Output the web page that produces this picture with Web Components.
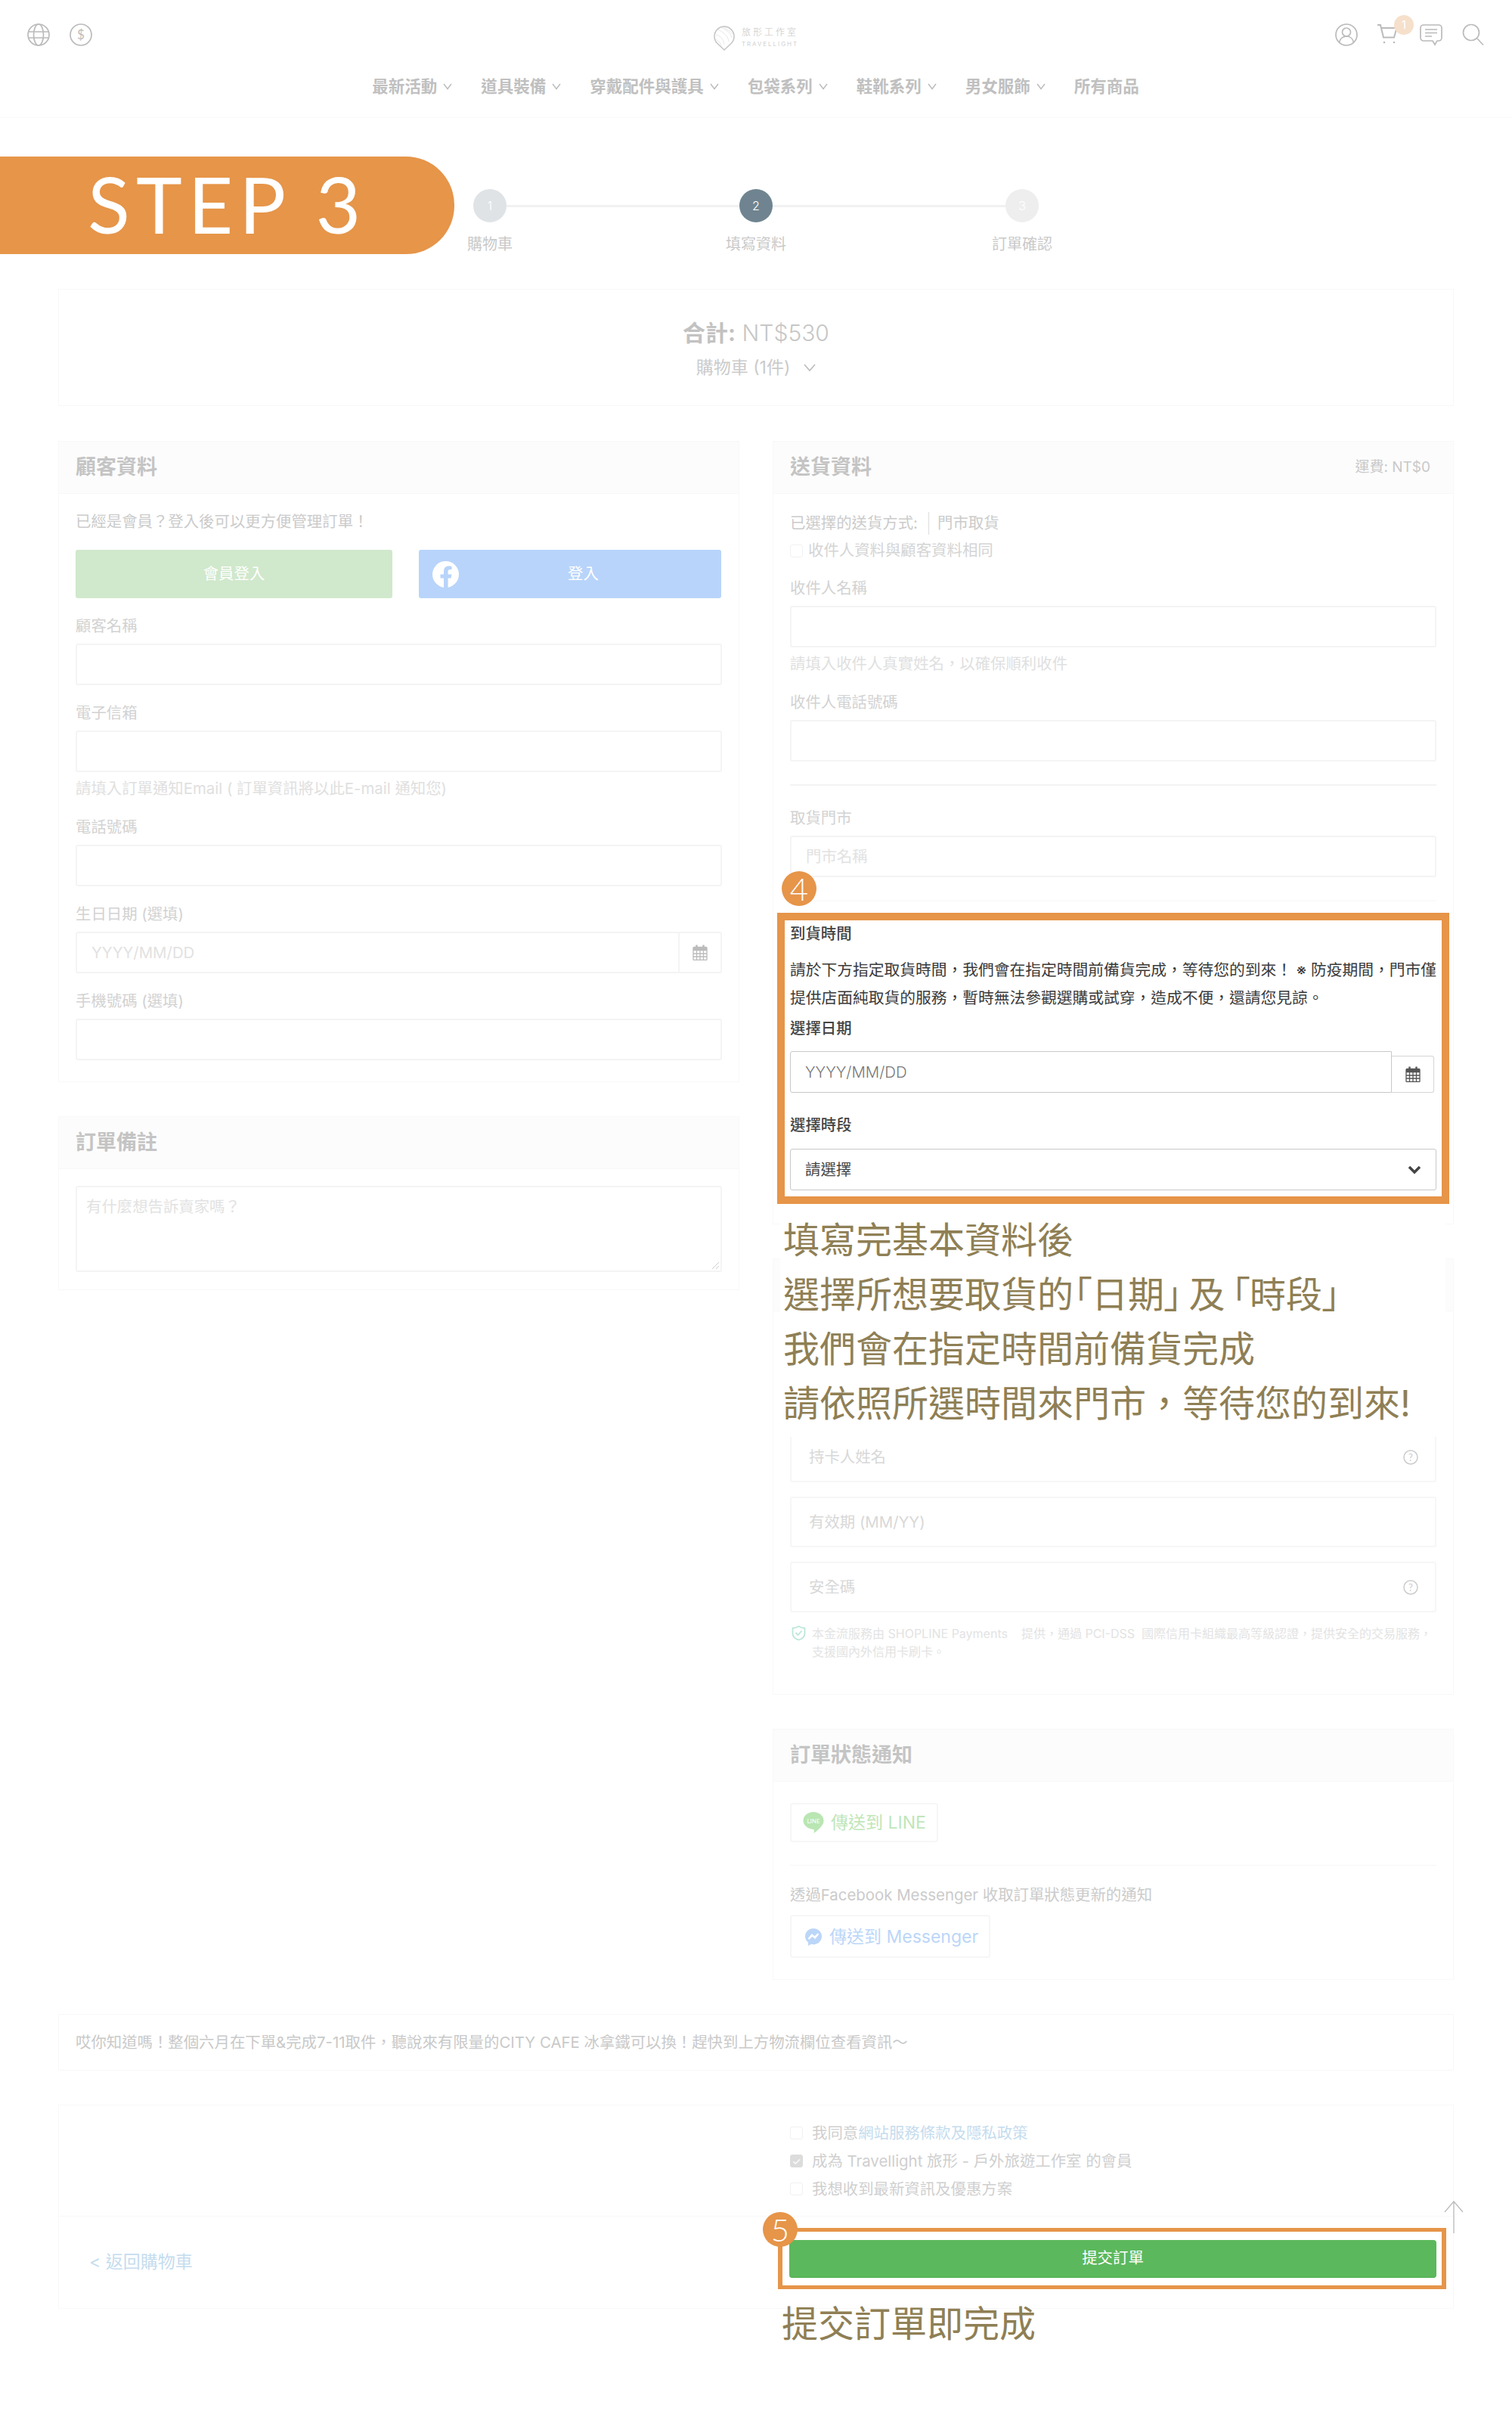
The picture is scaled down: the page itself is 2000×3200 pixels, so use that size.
<!DOCTYPE html>
<html lang="zh-Hant">
<head>
<meta charset="utf-8">
<title>Step 3</title>
<style>
  html, body { margin: 0; background: #fff; }
  body {
    position: relative;
    min-height: 3200px;
    font: 400 20.4px/28px Inter, "Noto Sans CJK TC", sans-serif;
    color: #cbcbcb;
  }
</style>
</head>
<body>
<site-header></site-header>
<step-bar></step-bar>
<cart-summary></cart-summary>

<form-columns>
  <div slot="left">
    <ui-panel heading="顧客資料">
      <member-login></member-login>
      <form-field label="顧客名稱"></form-field>
      <form-field label="電子信箱" hint="請填入訂單通知Email ( 訂單資訊將以此E-mail 通知您)"></form-field>
      <form-field label="電話號碼"></form-field>
      <form-field label="生日日期 (選填)" placeholder="YYYY/MM/DD" addon></form-field>
      <form-field label="手機號碼 (選填)"></form-field>
      <panel-gap size="28"></panel-gap>
    </ui-panel>
    <ui-panel heading="訂單備註">
      <note-area placeholder="有什麼想告訴賣家嗎？"></note-area>
    </ui-panel>
  </div>

  <div slot="right">
    <ui-panel heading="送貨資料" aside="運費: NT$0">
      <delivery-method></delivery-method>
      <form-field label="收件人名稱" hint="請填入收件人真實姓名，以確保順利收件" style="--top:18px"></form-field>
      <form-field label="收件人電話號碼"></form-field>
      <panel-rule top="30"></panel-rule>
      <form-field label="取貨門市" placeholder="門市名稱" style="--top:29px"></form-field>
      <panel-rule top="30" light></panel-rule>
      <pickup-time></pickup-time>
      <panel-gap size="26"></panel-gap>
    </ui-panel>
    <ui-panel>
      <panel-gap size="159"></panel-gap>
      <card-input placeholder="持卡人姓名" help></card-input>
      <card-input placeholder="有效期 (MM/YY)"></card-input>
      <card-input placeholder="安全碼" help></card-input>
      <secure-note></secure-note>
    </ui-panel>
    <ui-panel heading="訂單狀態通知">
      <notify-options></notify-options>
    </ui-panel>
  </div>
</form-columns>

<tip-banner>哎你知道嗎！整個六月在下單&amp;完成7-11取件，聽說來有限量的CITY CAFE 冰拿鐵可以換！趕快到上方物流欄位查看資訊～</tip-banner>
<order-actions></order-actions>

<tutorial-note mask style="left:1032px;top:1596px;width:880px;height:304px;padding:8px 0 0 4px">填寫完基本資料後<br>選擇所想要取貨的<span style="font-feature-settings:'palt';word-spacing:-5px">「日期」 及 「時段」</span><br>我們會在指定時間前備貨完成<br>請依照所選時間來門市，等待您的到來!</tutorial-note>
<tutorial-note style="left:1032px;top:3037px;padding-left:2px">提交訂單即完成</tutorial-note>
<scroll-top></scroll-top>

<script>
const grey = '#bbb';

const chevron = `<svg width="12" height="9" viewBox="0 0 12 9" fill="none" stroke="${grey}" stroke-width="1.4"><path d="M1 1l5 6.5L11 1"/></svg>`;

const calendar = (color) => `<svg width="20" height="21" viewBox="0 0 20 21" fill="none" stroke="${color}" stroke-width="1.3">
  <rect x="1" y="3.5" width="18" height="17" rx="1"/>
  <path d="M1 7.5h18M1 12h18M1 16h18M5.5 7.5v13M10 7.5v13M14.5 7.5v13"/>
  <path d="M1 5.5h18" stroke-width="3"/>
  <path d="M5.5 0.5v4M14.5 0.5v4" stroke-width="2.4"/>
</svg>`;

const icons = {
  globe: `<circle cx="15" cy="15" r="14"/><ellipse cx="15" cy="15" rx="6.5" ry="14"/><path d="M2 11h26M2 19h26"/>`,
  dollar: `<circle cx="15" cy="15" r="14"/><text x="15" y="21" text-anchor="middle" font-size="17" fill="${grey}" stroke="none" font-family="Lato">$</text>`,
  user: `<circle cx="15" cy="15" r="14"/><circle cx="15" cy="11.5" r="5.5"/><path d="M5.5 25c1-5 5-8 9.5-8s8.5 3 9.5 8"/>`,
  cart: `<path d="M0 2h4l4 16.5h14l3.5-12.5H5" stroke-width="2"/><circle cx="9" cy="25" r="1.3" fill="${grey}" stroke="none"/><circle cx="22" cy="25" r="1.3" fill="${grey}" stroke="none"/>`,
  chat: `<path d="M5 2h20a4 4 0 0 1 4 4v13a4 4 0 0 1-4 4h-2l-3 5-3-5H5a4 4 0 0 1-4-4V6a4 4 0 0 1 4-4z"/><path d="M7 8h16M7 12.500h16M7 17h9"/>`,
  search: `<circle cx="12" cy="12" r="10.500"/><path d="M20 20l8 8.500"/>`,
};
const icon = (name) => `<svg width="30" height="30" viewBox="0 0 30 30" fill="none" stroke="${grey}" stroke-width="1.7">${icons[name]}</svg>`;

class Base extends HTMLElement {
  connectedCallback() {
    if (this.shadowRoot) return;
    const shadow = this.attachShadow({ mode: 'open' });
    shadow.innerHTML = `<style>:host, * { box-sizing: border-box; } ${this.constructor.css}</style>${this.render()}`;
  }
  attr(name, fallback = '') {
    return this.hasAttribute(name) ? this.getAttribute(name) : fallback;
  }
}

class SiteHeader extends Base {
  static css = `
    :host { display: block; height: 156px; border-bottom: 1px solid #fafafa; }
    .top { height: 92px; display: grid; grid-template-columns: 1fr auto 1fr; align-items: center; padding: 0 36px; }
    .tools { display: flex; gap: 26px; align-items: center; }
    .tools.right { justify-content: flex-end; }
    .cart { position: relative; height: 30px; }
    .count {
      position: absolute; left: 22px; top: -24px; width: 26px; height: 26px; margin-top: 13px;
      border-radius: 50%; background: #f6e0cb; color: #fff; font-size: 15px; line-height: 26px; text-align: center;
    }
    .logo { display: flex; align-items: center; gap: 9px; padding-top: 8px; color: #c4c4c4; }
    .words { display: flex; flex-direction: column; font-weight: 300; }
    .zh { font-size: 12px; line-height: 16px; letter-spacing: 3px; }
    .en { font-size: 8px; line-height: 14px; letter-spacing: 2px; }
    nav { display: flex; justify-content: center; gap: 38px; height: 44px; align-items: center; padding-right: 1px; }
    .item { display: flex; align-items: center; gap: 8px; font-weight: 700; font-size: 21.500px; color: #c0c0c0; white-space: nowrap; }
  `;
  render() {
    const menu = ['最新活動', '道具裝備', '穿戴配件與護具', '包袋系列', '鞋靴系列', '男女服飾'];
    return `
      <div class="top">
        <div class="tools">${icon('globe')}${icon('dollar')}</div>
        <div class="logo">
          <svg width="28" height="33" viewBox="0 0 28 33" fill="none" stroke="#c6c6c6">
            <path stroke-width="1.6" d="M14 32L4.500 23A13 13 0 1 1 23.500 23z"/>
            <path stroke-width=".7" stroke="#ddd" d="M10 2c6 4 12 6 14 14M6 5c7 4 13 8 14 16M3 12c5 1 10 5 11 13M2 18c4 1 7 4 8 9M14 3c4 2 8 4 11 8"/>
          </svg>
          <div class="words"><span class="zh">旅形工作室</span><span class="en">TRAVELLIGHT</span></div>
        </div>
        <div class="tools right">
          ${icon('user')}
          <div class="cart">${icon('cart')}<span class="count">1</span></div>
          ${icon('chat')}${icon('search')}
        </div>
      </div>
      <nav>
        ${menu.map((m) => `<div class="item">${m}${chevron}</div>`).join('')}
        <div class="item">所有商品</div>
      </nav>`;
  }
}

class StepBar extends Base {
  static css = `
    :host { display: flex; margin-top: 51px; height: 129px; }
    .band {
      width: 601px; height: 129px; background: #e69549; border-radius: 0 64px 64px 0 / 0 64px 64px 0;
      color: #fff; font: 400 103px/125px Lato, sans-serif; letter-spacing: 8px; padding-left: 116px; white-space: nowrap;
    }
    .steps { margin: 43px 0 0 25px; display: grid; grid-template-columns: 44px 308px 44px 308px 44px; grid-template-rows: 44px 28px; row-gap: 15px; align-items: center; }
    .dot { width: 44px; height: 44px; border-radius: 50%; color: #fff; font-size: 16px; font-weight: 300; line-height: 44px; text-align: center; }
    .line { height: 3px; background: #f1f1f1; }
    .label { grid-row: 2; display: flex; justify-content: center; white-space: nowrap; font-size: 20px; color: #c9c9c9; }
  `;
  render() {
    return `
      <div class="band">STEP 3</div>
      <div class="steps">
        <div class="dot" style="background:#dfe3e6">1</div><div class="line"></div>
        <div class="dot" style="background:#6f8490">2</div><div class="line"></div>
        <div class="dot" style="background:#eee">3</div>
        <div class="label" style="grid-column:1">購物車</div>
        <div class="label" style="grid-column:3">填寫資料</div>
        <div class="label" style="grid-column:5">訂單確認</div>
      </div>`;
  }
}

class CartSummary extends Base {
  static css = `
    :host {
      display: flex; flex-direction: column; align-items: center; margin: 46px 77px 0; height: 155px;
      border: 1px solid #f8f8f8; padding-top: 37px;
    }
    .total { font-size: 30px; line-height: 40px; font-weight: 300; color: #c6c6c6; }
    b { font-weight: 700; color: #c2c2c2; }
    .count { display: flex; align-items: center; gap: 18px; margin-top: 8px; font-size: 23px; line-height: 36px; color: #cbcbcb; }
  `;
  render() {
    return `
      <div class="total"><b>合計:</b> NT$530</div>
      <div class="count">購物車 (1件) <svg width="16" height="11" viewBox="0 0 16 11" fill="none" stroke="${grey}" stroke-width="1.6"><path d="M1 1l7 8 7-8"/></svg></div>`;
  }
}

class FormColumns extends Base {
  static css = `
    :host { display: grid; grid-template-columns: 901px 901px; column-gap: 44px; margin: 46px 77px 0; align-items: start; }
  `;
  render() {
    return `<slot name="left"></slot><slot name="right"></slot>`;
  }
}

class UiPanel extends Base {
  static css = `
    :host { display: block; border: 1px solid #f8f8f8; margin-bottom: 45px; }
    .head {
      display: flex; justify-content: space-between; align-items: center; height: 69px; padding: 0 30px 0 22px;
      background: #fcfcfc; border-bottom: 1px solid #f8f8f8;
    }
    h3 { margin: 0; font-size: 27px; font-weight: 700; color: #c4c4c4; }
    .aside { font-size: 19px; color: #c9c9c9; }
    .body { padding: 0 22px; }
  `;
  render() {
    const heading = this.attr('heading');
    const aside = this.attr('aside');
    const head = `<div class="head"><h3>${heading}</h3>${aside ? `<span class="aside">${aside}</span>` : ''}</div>`;
    return `${heading ? head : '<div class="head"></div>'}<div class="body"><slot></slot></div>`;
  }
}

class PanelGap extends Base {
  static css = `:host { display: block; }`;
  render() {
    this.style.height = `${this.attr('size', 20)}px`;
    return '';
  }
}

class PanelRule extends Base {
  static css = `
    :host { display: block; height: 2px; background: #f3f3f3; }
    :host([light]) { background: #fafafa; }
  `;
  render() {
    this.style.marginTop = `${this.attr('top', 20)}px`;
    return '';
  }
}

class MemberLogin extends Base {
  static css = `
    :host { display: block; padding-top: 23px; }
    .intro { color: #cbcbcb; }
    .buttons { display: grid; grid-template-columns: 419px 400px; column-gap: 35px; margin-top: 23px; margin-right: -1px; }
    .btn { height: 64px; border-radius: 3px; color: #fff; display: flex; align-items: center; justify-content: center; }
    .green { background: #d0e8cc; }
    .blue { background: #b8d4fa; padding: 0 18px; }
    .blue span { flex: 1; text-align: center; }
  `;
  render() {
    return `
      <div class="intro">已經是會員？登入後可以更方便管理訂單！</div>
      <div class="buttons">
        <div class="btn green">會員登入</div>
        <div class="btn blue">
          <svg width="35" height="35" viewBox="0 0 35 35"><circle cx="17.500" cy="17.500" r="17.500" fill="#fff"/><path fill="#b8d4fa" d="M15 35V22.500h-4.500V17.500H15v-4c0-4.500 2.700-7 6.700-7 1.900 0 3.800.3 3.800.3v4.300h-2.100c-2.100 0-2.800 1.300-2.800 2.700v3.700h4.800l-.8 5h-4V35z"/></svg>
          <span>登入</span>
        </div>
      </div>`;
  }
}

class FormField extends Base {
  static css = `
    :host { display: block; margin-top: var(--top, 23px); }
    .label { color: #d2d2d2; }
    .row { display: flex; margin-top: var(--gap, 9px); align-items: flex-end; }
    .box {
      flex: 1; height: 55px; border: 2px solid #f4f4f4; border-radius: 3px; padding: 0 19px;
      display: flex; align-items: center; justify-content: space-between; color: #e2e2e2;
    }
    .addon { width: 56px; height: 55px; border: 2px solid #f4f4f4; border-left: 0; border-radius: 0 3px 3px 0; display: flex; align-items: center; justify-content: center; }
    .has-addon .box { border-radius: 3px 0 0 3px; }
    .hint { margin-top: 8px; color: #e0e0e0; }
    :host([strong]) .label { color: #444; font-weight: 500; }
    :host([strong]) .box { border: 1.500px solid #c8c8c8; color: #777; font-weight: 300; }
    :host([strong][select]) .box { color: #444; font-weight: 400; }
    :host([strong]) .addon { height: 49px; margin-right: 3px; border: 1px solid #d5d5d5; border-left: 0; }
  `;
  render() {
    const strong = this.hasAttribute('strong');
    const addon = this.hasAttribute('addon');
    const arrow = this.hasAttribute('select')
      ? `<svg width="18" height="12" viewBox="0 0 18 12" fill="none" stroke="#444" stroke-width="3.500"><path d="M2 2l7 7 7-7"/></svg>` : '';
    const hint = this.attr('hint');
    return `
      <div class="label">${this.attr('label')}</div>
      <div class="row ${addon ? 'has-addon' : ''}">
        <div class="box"><span>${this.attr('placeholder')}</span>${arrow}</div>
        ${addon ? `<div class="addon">${calendar(strong ? '#555' : '#bbb')}</div>` : ''}
      </div>
      ${hint ? `<div class="hint">${hint}</div>` : ''}`;
  }
}

class NoteArea extends Base {
  static css = `
    :host { display: block; padding: 22px 0 23px; }
    .area { position: relative; height: 114px; border: 2px solid #f4f4f4; border-radius: 3px; padding: 12px 12px; color: #e2e2e2; }
    svg { position: absolute; right: 1px; bottom: 1px; }
  `;
  render() {
    return `<div class="area">${this.attr('placeholder')}<svg width="11" height="11" viewBox="0 0 11 11" fill="none" stroke="#ccc"><path d="M1 10l9-9M6 10l4-4"/></svg></div>`;
  }
}

class DeliveryMethod extends Base {
  static css = `
    :host { display: block; padding-top: 21px; }
    .line { display: flex; align-items: center; height: 36px; color: #cbcbcb; white-space: nowrap; }
    .sep { width: 1px; height: 30px; background: #ddd; margin: 0 11px 0 14px; }
    .check { width: 17px; height: 17px; border: 1px solid #f2f2f2; border-radius: 3px; margin-right: 7px; }
    .muted { color: #d4d4d4; }
  `;
  render() {
    return `
      <div class="line">已選擇的送貨方式:<span class="sep"></span>門市取貨</div>
      <div class="line muted"><span class="check"></span>收件人資料與顧客資料相同</div>`;
  }
}

class PickupTime extends Base {
  static css = `
    :host {
      display: block; position: relative; margin: 15px -17px 0; border: 10px solid #e69549; padding: 4px 7px 8px; background: #fff;
    }
    .badge {
      position: absolute; left: -4px; top: -65px; width: 46px; height: 46px; border-radius: 50%;
      background: #e69549; color: #fff; font: 300 42px/46px Lato, sans-serif; text-align: center;
    }
    .title { color: #444; font-weight: 500; }
    p { margin: 15px -8px 0 0; color: #3a3a3a; font-size: 20.75px; line-height: 37px; }
  `;
  render() {
    return `
      <span class="badge">4</span>
      <div class="title">到貨時間</div>
      <p>請於下方指定取貨時間，我們會在指定時間前備貨完成，等待您的到來！ ※ 防疫期間，門市僅<br>提供店面純取貨的服務，暫時無法參觀選購或試穿，造成不便，還請您見諒。</p>
      <form-field strong addon label="選擇日期" placeholder="YYYY/MM/DD" style="--top:8px;--gap:16px"></form-field>
      <form-field strong select label="選擇時段" placeholder="請選擇" style="--top:29px;--gap:17px"></form-field>`;
  }
}

class CardInput extends Base {
  static css = `
    :host { display: block; margin-bottom: 19px; }
    .box {
      height: 67px; border: 2px solid #f6f6f6; border-radius: 3px; padding: 0 22px 0 23px;
      display: flex; align-items: center; justify-content: space-between; color: #d8d8d8;
    }
  `;
  render() {
    const help = `<svg width="20" height="20" viewBox="0 0 20 20" fill="none" stroke="#ccc" stroke-width="1.500"><circle cx="10" cy="10" r="9"/><text x="10" y="15" text-anchor="middle" font-size="13" fill="#ccc" stroke="none" font-family="Lato">?</text></svg>`;
    return `<div class="box"><span>${this.attr('placeholder')}</span>${this.hasAttribute('help') ? help : ''}</div>`;
  }
}

class SecureNote extends Base {
  static css = `
    :host { display: flex; gap: 8px; margin-top: -3px; padding: 0 0 44px 2px; font-size: 16px; line-height: 24px; color: #e3e3e3; }
    svg { flex: none; margin-top: 1px; }
    span { white-space: nowrap; }
  `;
  render() {
    return `
      <svg width="19" height="21" viewBox="0 0 19 21" fill="none" stroke="#bde6da" stroke-width="1.800"><path d="M9.500 1.500c2.500 1.500 5 2.300 8 2.500v7c0 4-3.500 7-8 8.500-4.500-1.500-8-4.500-8-8.500V4c3-.2 5.500-1 8-2.500z"/><path d="M5.500 10l3 3 5-5.500"/></svg>
      <span>本金流服務由 SHOPLINE Payments &nbsp;&nbsp; 提供，通過 PCI-DSS &nbsp;國際信用卡組織最高等級認證，提供安全的交易服務，<br>支援國內外信用卡刷卡。</span>`;
  }
}

class NotifyOptions extends Base {
  static css = `
    :host { display: block; padding: 28px 0 28px; }
    .send {
      display: inline-flex; align-items: center; gap: 9px; border: 2px solid #f6f6f6; border-radius: 4px; font-size: 23px; white-space: nowrap;
    }
    .line { height: 52px; padding: 0 14px 0 15px; color: #bfe6b8; }
    .msgr { height: 57px; padding: 0 14px 0 17px; color: #bcd6f8; }
    hr { border: 0; height: 1px; background: #f6f6f6; margin: 30px 0 25px; }
    .text { color: #cbcbcb; margin-bottom: 12px; }
    .wrap { display: flex; }
  `;
  render() {
    return `
      <div class="wrap"><div class="send line">
        <svg width="28" height="31" viewBox="0 0 28 31"><path fill="#b9e6b2" d="M14 1c7.500 0 13.500 5 13.500 11.500 0 5-5 11-13 16.500 1-3.500.5-5-1-5C6.500 23.500.5 18.500.5 12.500.5 6 6.500 1 14 1z"/><text x="14" y="16" text-anchor="middle" font-size="8" fill="#fff" font-family="Lato">LINE</text></svg>
        傳送到 LINE</div></div>
      <hr>
      <div class="text">透過Facebook Messenger 收取訂單狀態更新的通知</div>
      <div class="wrap"><div class="send msgr">
        <svg width="24" height="24" viewBox="0 0 24 24"><path fill="#bcd6f8" d="M12 1C6 1 1 5.500 1 11.500c0 3.300 1.500 6 4 8V24l4-2.200c1 .3 2 .4 3 .4 6 0 11-4.700 11-10.700S18 1 12 1z"/><path fill="none" stroke="#fff" stroke-width="2" d="M5.500 15L10 9.500l3.500 3L18.500 8 14 13.500l-3.500-3z"/></svg>
        傳送到 Messenger</div></div>`;
  }
}

class TipBanner extends Base {
  static css = `
    :host { display: flex; align-items: center; margin: 0 77px; height: 75px; padding: 0 22px 0 22px; border: 1px solid #f8f8f8; color: #c9c9c9; }
  `;
  render() {
    return `<slot></slot>`;
  }
}

class OrderActions extends Base {
  static css = `
    :host { display: block; margin: 45px 77px 0; height: 270px; border: 1px solid #f8f8f8; }
    .agree { height: 147px; border-bottom: 1px solid #f8f8f8; padding: 18px 0 0 967px; }
    .check { display: flex; align-items: center; height: 37px; color: #cfcfcf; white-space: nowrap; }
    .box { width: 17px; height: 17px; border: 1px solid #f1f1f1; border-radius: 3px; margin-right: 12px; flex: none; }
    .box.on { background: #dcdcdc; border-color: #dcdcdc; color: #fff; font-size: 14px; line-height: 15px; text-align: center; }
    .link { color: #c5dcee; }
    .submit { display: flex; justify-content: space-between; }
    .back { margin: 46px 0 0 40px; font-size: 23px; color: #c5dcee; white-space: nowrap; }
    .frame { position: relative; width: 884px; height: 81px; margin: 15px 9px 0 0; border: 5px solid #e69549; border-width: 5px 6px; padding: 11px 7px 0 9px; background: #fff; }
    .badge {
      position: absolute; left: -26px; top: -26px; width: 46px; height: 46px; border-radius: 50%;
      background: #e69549; color: #fff; font: 300 42px/46px Lato, sans-serif; text-align: center;
    }
    .btn { height: 50px; border-radius: 4px; background: #5cb85c; border-bottom: 1px solid #4cae4c; color: #fff; text-align: center; line-height: 48px; }
  `;
  render() {
    return `
      <div class="agree">
        <div class="check"><span class="box"></span>我同意<span class="link">網站服務條款及隱私政策</span></div>
        <div class="check"><span class="box on">✓</span>成為 Travellight 旅形 - 戶外旅遊工作室 的會員</div>
        <div class="check"><span class="box"></span>我想收到最新資訊及優惠方案</div>
      </div>
      <div class="submit">
        <div class="back">&lt; 返回購物車</div>
        <div class="frame"><span class="badge">5</span><div class="btn">提交訂單</div></div>
      </div>`;
  }
}

class TutorialNote extends Base {
  static css = `
    :host { position: absolute; display: block; font-size: 48px; line-height: 72px; font-weight: 400; color: #8f7f55; white-space: nowrap; }
    :host([mask]) { background: #fff; }
  `;
  render() {
    return `<slot></slot>`;
  }
}

class ScrollTop extends Base {
  static css = `
    :host { position: absolute; left: 1910px; top: 2910px; display: block; width: 26px; height: 43px; }
  `;
  render() {
    return `<svg width="26" height="43" viewBox="0 0 26 43" fill="none" stroke="#bbb" stroke-width="1.300"><path d="M13 1v42M1 15L13 1l12 14"/></svg>`;
  }
}

customElements.define('site-header', SiteHeader);
customElements.define('step-bar', StepBar);
customElements.define('cart-summary', CartSummary);
customElements.define('form-columns', FormColumns);
customElements.define('ui-panel', UiPanel);
customElements.define('panel-gap', PanelGap);
customElements.define('panel-rule', PanelRule);
customElements.define('member-login', MemberLogin);
customElements.define('form-field', FormField);
customElements.define('note-area', NoteArea);
customElements.define('delivery-method', DeliveryMethod);
customElements.define('pickup-time', PickupTime);
customElements.define('card-input', CardInput);
customElements.define('secure-note', SecureNote);
customElements.define('notify-options', NotifyOptions);
customElements.define('tip-banner', TipBanner);
customElements.define('order-actions', OrderActions);
customElements.define('tutorial-note', TutorialNote);
customElements.define('scroll-top', ScrollTop);
</script>
</body>
</html>
